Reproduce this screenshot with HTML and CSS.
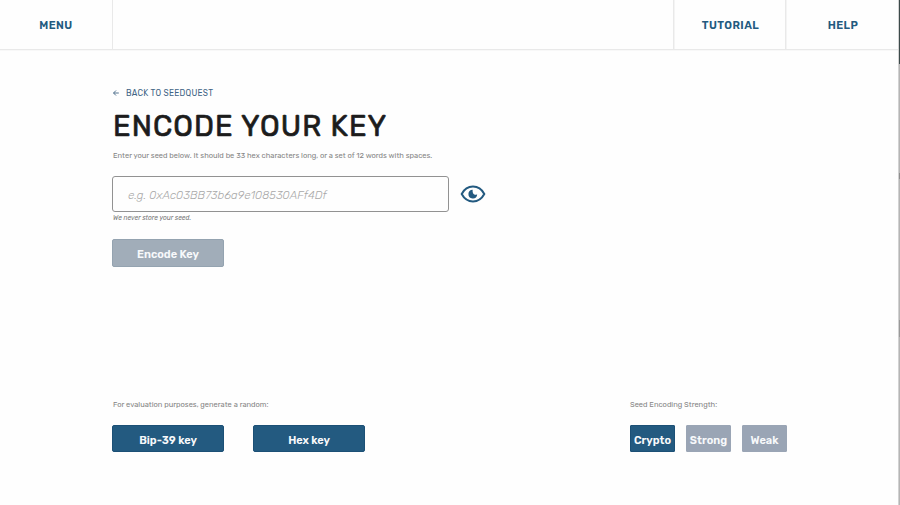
FILE: index.html
```html
<!DOCTYPE html>
<html lang="en">
<head>
<meta charset="utf-8">
<title>SeedQuest</title>
<link rel="stylesheet" href="styles.css">
</head>
<body>
<div class="page">
  <header class="nav">
    <a class="nav-item nav-menu">MENU</a>
    <span class="nav-space"></span>
    <a class="nav-item nav-tutorial">TUTORIAL</a>
    <a class="nav-item nav-help">HELP</a>
  </header>
  <main class="content">
    <a class="back">
      <svg class="arrow" viewBox="0 0 6 6"><path d="M5.8 3H.6M3 .5.5 3 3 5.5"/></svg>
      <span>BACK TO SEEDQUEST</span>
    </a>
    <h1 class="title">ENCODE YOUR KEY</h1>
    <p class="intro">Enter your seed below. It should be 33 hex characters long, or a set of 12 words with spaces.</p>
    <div class="field-row">
      <div class="field"><span>e.g. 0xAc03BB73b6a9e108530AFf4Df</span></div>
      <svg class="eye" viewBox="0 0 26 18">
        <path class="lid" d="M1.7 9C4.3 4.1 8.5 1.6 13 1.6S21.700 4.100 24.300 9C21.700 13.900 17.500 16.400 13 16.400S4.300 13.900 1.700 9Z"/>
        <path class="pupil" d="M12.700 4.700A4.400 4.400 0 1 0 17.200 9.600C15.500 10 13.700 9.500 13.100 8.200 12.500 7 12.600 5.800 12.700 4.700Z"/>
      </svg>
    </div>
    <p class="note">We never store your seed.</p>
    <a class="button muted encode">Encode Key</a>
  </main>
  <footer class="tools">
    <section>
      <p class="label random-label">For evaluation purposes, generate a random:</p>
      <div class="random-keys">
        <a class="button bip">Bip-39 key</a>
        <a class="button hex">Hex key</a>
      </div>
    </section>
    <section>
      <p class="label strength-label">Seed Encoding Strength:</p>
      <div class="strengths">
        <a class="button small crypto">Crypto</a>
        <a class="button small off strong">Strong</a>
        <a class="button small off weak">Weak</a>
      </div>
    </section>
  </footer>
</div>
<div class="edge"></div>
</body>
</html>
```
FILE: styles.css
```css
* { box-sizing: border-box; }
body {
  margin: 0;
  display: flex;
  width: 900px;
  height: 505px;
  overflow: hidden;
  background: #fefefe;
  font-family: Rubik, Roboto, sans-serif;
  color: #235a80;
}
h1, p { margin: 0; }
a, p, h1, span { white-space: nowrap; }
.page { width: 898px; display: flex; flex-direction: column; }
.edge {
  width: 2px;
  border-left: 1px solid #d2d2d2;
  background: linear-gradient(#3c4a4a 64px, #b5b5b5 64px, #b5b5b5 173px, #8e8e8e 173px, #8e8e8e 179px, #b5b5b5 179px, #b5b5b5 320px, #999 320px, #999 337px, #b5b5b5 337px);
}
.nav { display: flex; height: 50px; border-bottom: 1px solid #e9e9e9; box-shadow: 0 1px #f8f8f8; }
.nav-item {
  display: flex;
  align-items: center;
  justify-content: center;
  width: 113px;
  padding-top: 2px;
  font-size: 11px;
  font-weight: 600;
  letter-spacing: .4px;
}
.nav-menu { border-right: 1px solid #e9e9e9; }
.nav-space { flex: 1; }
.nav-tutorial, .nav-help { border-left: 1px solid #e9e9e9; box-shadow: inset 1px 0 #f4f4f4; }
.nav-tutorial { width: 112px; padding-left: 2px; }
.nav-help { padding-left: 2px; }
.content { padding: 38px 0 0 112px; }
.back { display: flex; align-items: center; height: 10px; gap: 7px; padding-left: 1px; font-size: 8.300px; letter-spacing: .26px; color: #416485; }
.arrow { width: 6px; height: 6px; fill: none; stroke: #416485; stroke-width: .9; }
.title { height: 36px; margin-top: 10px; padding-left: 1px; line-height: 36px; font-size: 29px; font-weight: 400; letter-spacing: 1.080px; color: #1c1c1c; -webkit-text-stroke: .7px #1c1c1c; }
.intro { height: 10px; margin-top: 7px; padding-left: 1px; line-height: 10px; font-size: 7.500px; color: #858585; }
.field-row { display: flex; align-items: center; height: 36px; margin-top: 15px; gap: 12px; }
.field { display: flex; align-items: center; width: 337px; height: 36px; padding: 2px 0 0 15px; border: 1px solid #929292; border-radius: 3px; font-size: 11.600px; font-weight: 300; font-style: italic; color: #a8a8a8; }
.eye { width: 26px; height: 18px; margin-left: -1px; }
.lid { fill: none; stroke: #235a80; stroke-width: 2; }
.pupil { fill: #235a80; }
.note { height: 9px; margin-top: 2px; padding-left: 1px; line-height: 9px; font-size: 6.600px; font-style: italic; color: #777; }
.button {
  display: flex;
  align-items: center;
  justify-content: center;
  width: 112px;
  height: 27px;
  padding-top: 3px;
  border: 1px solid #1c5076;
  border-radius: 2px;
  background: #235a80;
  color: #f7f9fb;
  font-size: 11px;
  font-weight: 600;
}
.muted { background: #a1adb9; border-color: #94a3b0; }
.encode { height: 28px; padding-top: 2px; margin-top: 16px; }
.tools { display: flex; justify-content: space-between; margin-top: 133px; padding: 0 111px 0 112px; }
.label { height: 10px; padding-left: 1px; line-height: 10px; font-size: 7.500px; color: #858585; }
.strength-label { padding-left: 0; }
.random-keys, .strengths { display: flex; margin-top: 15px; }
.random-keys { gap: 29px; }
.strengths { gap: 11px; }
.small { width: 45px; border-radius: 1px; }
.off { background: #9aa5b5; border-color: #9aa5b5; }
```
